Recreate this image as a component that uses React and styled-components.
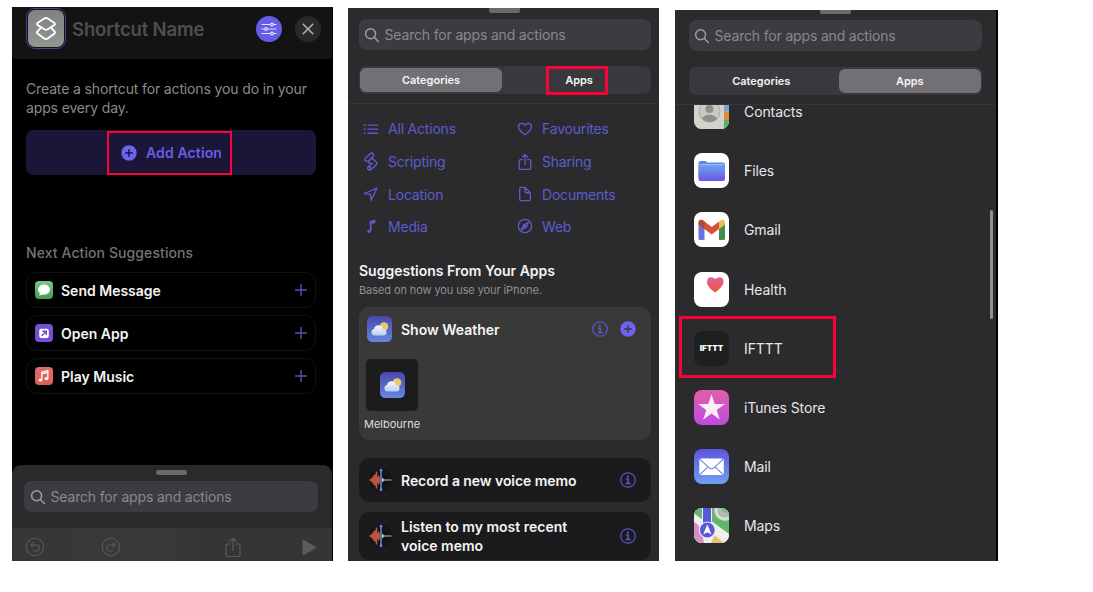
import React from 'react';
import styled, { createGlobalStyle } from 'styled-components';

const Global = createGlobalStyle`
  * { box-sizing: border-box; }
  body { margin: 0; background: #fff; font-family: Inter, "Liberation Sans", sans-serif; }
  svg { display: block; flex: none; }
`;

const Page = styled.main`
  width: 1093px;
  height: 592px;
  display: flex;
  align-items: flex-start;
  overflow: hidden;
`;

const Panel = styled.section`
  width: ${p => p.$w}px;
  height: ${p => 561 - p.$top}px;
  margin-top: ${p => p.$top}px;
  margin-left: ${p => p.$gap}px;
  flex: none;
  display: flex;
  flex-direction: column;
  overflow: hidden;
  position: relative;
  background: ${p => p.$bg || '#2b2b2d'};
  border-right: ${p => p.$edge || 0}px solid #000;
`;

const Label = styled.span`
  font-size: ${p => p.$size || 14}px;
  font-weight: ${p => p.$weight || 400};
  letter-spacing: ${p => p.$ls || 0}px;
  line-height: ${p => p.$lh || 19}px;
  color: ${p => p.$color || '#f4f4f4'};
  white-space: pre;
`;

const Highlight = styled.div`
  position: absolute;
  left: ${p => p.$x}px;
  top: ${p => p.$y}px;
  width: ${p => p.$w}px;
  height: ${p => p.$h}px;
  border: ${p => p.$t}px solid #fb0339;
`;

/* shortcut editor */
const Header = styled.header`
  height: 52px;
  padding: 1px 11px 0 14px;
  display: flex;
  align-items: flex-start;
  background: #131313;
`;
const IconRing = styled.div`
  width: 40px;
  height: 41px;
  border: 1.5px solid #42419a;
  border-radius: 9px;
  padding: 1px;
  margin-right: 6px;
`;
const ShortcutTile = styled.div`
  width: 100%;
  height: 100%;
  border-radius: 7px;
  background: linear-gradient(#7f827f, #929792);
  display: flex;
  align-items: center;
  justify-content: center;
`;
const Title = styled(Label)`
  flex: 1;
  margin-top: 9px;
`;
const RoundButton = styled.div`
  width: 26px;
  height: 26px;
  margin: 8px 0 0 ${p => p.$ml || 0}px;
  border-radius: 50%;
  background: ${p => p.$bg};
  display: flex;
  align-items: center;
  justify-content: center;
`;
const EditorBody = styled.div`
  flex: 1;
  padding: 20px 16px 0 14px;
  display: flex;
  flex-direction: column;
`;
const AddButton = styled.div`
  position: relative;
  height: 45px;
  margin-top: 13px;
  border-radius: 7px;
  background: #1b1638;
  display: flex;
  align-items: center;
  padding-left: 95px;
  gap: 9px;
`;
const SectionLabel = styled(Label)`
  margin-top: 68px;
`;
const SuggestionList = styled.div`
  margin-top: 10px;
  display: flex;
  flex-direction: column;
  gap: 7px;
`;
const SuggestionRow = styled.div`
  height: 36px;
  border: 1px solid #121212;
  border-radius: 11px;
  padding: 0 8px;
  display: flex;
  align-items: center;
  gap: 8px;
  & > span { flex: 1; }
`;
const BottomSheet = styled.div`
  height: 96px;
  border-radius: 9px 9px 0 0;
  background: #2a292b;
  display: flex;
  flex-direction: column;
  overflow: hidden;
`;
const Grabber = styled.div`
  width: 31px;
  height: ${p => p.$h || 5}px;
  margin: ${p => p.$m};
  flex: none;
  border-radius: ${p => (p.$cut ? '0 0 2px 2px' : '2.5px')};
  background: #6a6a6c;
`;
const Search = styled.div`
  height: 31px;
  margin: ${p => p.$m};
  flex: none;
  border-radius: 8px;
  background: #3d3b40;
  display: flex;
  align-items: center;
  padding-left: ${p => p.$pl}px;
  gap: 4.5px;
`;
const Toolbar = styled.div`
  height: 33px;
  margin-top: 16px;
  padding: 0 15px 0 13px;
  display: flex;
  align-items: center;
  background: linear-gradient(90deg, #363537 0, #3a383b 35%, #39373a 50%, #343435 62%, #353536 100%);
  & > svg { margin-top: 5px; }
`;
const ToolGap = styled.div`
  width: ${p => p.$w}px;
`;

/* action picker */
const Segments = styled.div`
  position: relative;
  height: 28px;
  margin: ${p => p.$m};
  flex: none;
  padding: 2px 1px;
  border-radius: 7px;
  background: #3a383c;
  display: flex;
  gap: 6px;
`;
const Segment = styled.div`
  flex: 1;
  border-radius: 6px;
  background: ${p => (p.$active ? '#727075' : 'transparent')};
  display: flex;
  align-items: center;
  justify-content: center;
`;
const Divider = styled.div`
  height: 1px;
  flex: none;
  margin-top: 9px;
  background: #363638;
`;
const CategoryGrid = styled.div`
  padding: 8px 0 0 15px;
  display: grid;
  grid-template-columns: 154px 1fr;
  grid-template-rows: 33px 33px 32px 32px;
`;
const Category = styled.div`
  display: flex;
  align-items: center;
  gap: 9px;
`;
const Headline = styled.div`
  margin: 19px 0 0 11px;
  display: flex;
  flex-direction: column;
  gap: 1px;
`;
const WeatherCard = styled.div`
  height: 133px;
  flex: none;
  margin: 7px 8px 0 11px;
  padding: 9px 15px 0 8px;
  border-radius: 11px;
  background: #393939;
`;
const CardHead = styled.div`
  height: 26px;
  display: flex;
  align-items: center;
`;
const CardTitle = styled(Label)`
  flex: 1;
  margin-left: 9px;
`;
const PlaceTile = styled.div`
  width: 52px;
  height: 52px;
  margin: 17px 0 0 -1px;
  border-radius: 5px;
  background: #1c1c1d;
  display: flex;
  align-items: center;
  justify-content: center;
`;
const PlaceName = styled(Label)`
  display: block;
  margin: 5px 0 0 -3px;
`;
const MemoCard = styled.div`
  height: ${p => p.$h}px;
  flex: none;
  margin: ${p => p.$mt}px 8px 0 11px;
  padding: 0 15px 0 9px;
  border-radius: 11px;
  background: #1b1b1d;
  display: flex;
  align-items: center;
  & > span { flex: 1; margin-left: 9px; }
`;

/* app list */
const AppList = styled.div`
  flex: 1;
  overflow: hidden;
  padding-left: 19px;
`;
const AppRow = styled.div`
  height: 59.2px;
  margin-top: ${p => (p.$first ? -23.1 : 0)}px;
  display: flex;
  align-items: center;
  gap: 15px;
`;
const AppIcon = styled.div`
  width: 35px;
  height: 35px;
  flex: none;
  border-radius: 8px;
  overflow: hidden;
  background: ${p => p.$bg};
  display: flex;
  align-items: center;
  justify-content: center;
`;
const ScrollThumb = styled.div`
  position: absolute;
  left: 315px;
  top: 200px;
  width: 3px;
  height: 109px;
  border-radius: 2px;
  background: #929293;
`;

const BLUE = '#5d5bd0';
const stroke = (color, width) => ({ fill: 'none', stroke: color, strokeWidth: width, strokeLinecap: 'round', strokeLinejoin: 'round' });

const Magnifier = () => (
  <svg width="16" height="16" viewBox="0 0 16 16" {...stroke('#a09fa3', 1.4)}>
    <circle cx="6.6" cy="6.8" r="5" /><path d="M10.4 10.6l4 4" />
  </svg>
);
const PlusDisc = ({ size = 16, cut = '#1b1638' }) => (
  <svg width={size} height={size} viewBox="0 0 16 16">
    <circle cx="8" cy="8" r="7.7" fill="#6c63f0" />
    <path d="M8 4.7v6.6M4.7 8h6.6" {...stroke(cut, 1.5)} />
  </svg>
);
const Info = () => (
  <svg width="16" height="16" viewBox="0 0 16 16">
    <circle cx="8" cy="8" r="7.2" {...stroke('#5755c4', 1.3)} />
    <circle cx="7.8" cy="4.5" r="1.1" fill="#5d5bd0" />
    <path d="M6.500 7h1.700v4.300M6.200 11.500h3.900" {...stroke('#5d5bd0', 1.5)} />
  </svg>
);
const Plus = () => (
  <svg width="12" height="12" viewBox="0 0 12 12"><path d="M6 .5v11M.5 6h11" {...stroke('#5452bd', 1.4)} /></svg>
);
const ShareGlyph = ({ w, h, color, sw = 1.2 }) => (
  <svg width={w} height={h} viewBox="0 0 16 20" {...stroke(color, sw)}>
    <path d="M5 6.500H2.500Q1 6.500 1 8v9.500Q1 19 2.500 19h11q1.500 0 1.500-1.500V8q0-1.500-1.500-1.500H11M8 13V1M4.800 4L8 .8 11.200 4" />
  </svg>
);
const Turn = ({ flip }) => (
  <svg width="20" height="20" viewBox="0 0 20 20" {...stroke('#545355', 1.3)}>
    <circle cx="10" cy="10" r="8.700" />
    <path transform={flip ? 'matrix(-1 0 0 1 20 0)' : undefined} d="M8.200 5.500L5.800 7.900l2.400 2.400M6 7.900h5.200a3 3 0 0 1 0 6H8.500" />
  </svg>
);

const categoryGlyphs = {
  list: <><path d="M5 4h10M5 8.200h10M5 12.400h10" /><path d="M1.200 4h.6M1.200 8.200h.6M1.200 12.400h.6" strokeWidth="1.600" /></>,
  heart: <path d="M8 14C5 11.800 1.300 9 1.300 5.700 1.300 3.600 2.700 2.200 4.500 2.200 6 2.200 7.300 3 8 4.400 8.700 3 10 2.200 11.500 2.200c1.800 0 3.200 1.400 3.200 3.500C14.700 9 11 11.800 8 14z" />,
  location: <path d="M14.200 1.800L1.200 7.700l6.300.8.600 6.200z" />,
  note: <path d="M7 3l5.300-1.500v3.200L8.300 5.900V12.500q0 2-2 2.400-2 .3-2.100-1.200 0-1.400 2.800-2.100z" fill={BLUE} strokeWidth=".5" />,
  doc: <path d="M2.500 2.500q0-1.300 1.300-1.300H8l5.500 5.500V13.500q0 1.300-1.300 1.300H3.800q-1.300 0-1.300-1.300zM8 1.200v4.300q0 1.200 1.200 1.200h4.300" />,
  compass: <><circle cx="8" cy="8" r="6.900" /><path d="M11.700 4.300L9.200 9.200 4.300 11.700 6.800 6.800z" /><circle cx="8" cy="8" r="1" fill={BLUE} /></>,
};
const CategoryIcon = ({ name }) => {
  if (name === 'share') {
    return <svg width="16" height="18" viewBox="-1 -1 18 22" {...stroke(BLUE, 1.6)}><path d="M5 7H2.500Q1 7 1 8.500v9Q1 19 2.500 19h11q1.500 0 1.500-1.500v-9Q15 7 13.500 7H11M8 13V1M4.800 4L8 .8 11.200 4" /></svg>;
  }
  if (name === 'script') {
    return (
      <svg width="16" height="19" viewBox="-1 -.5 16 19" {...stroke(BLUE, 1.4)}>
        <path d="M4.600 8.600L1.700 8.500Q.2 7.200 1.300 5.900L6.300 1.100Q8-.1 9.400 1.600 10.100 3 8.900 4.200L4.600 8.600Q3.900 9.900 5.300 10.500L8 11l-3.700 3.200Q3.200 15.300 4 16.700 5.300 18 7 16.900L12.500 11.900Q13.500 10.800 12.300 9.500L8.700 6.300 6.800 6.400M4.400 14.200q2.200-.3 2.700 2.500" />
      </svg>
    );
  }
  return <svg width="16" height="16" viewBox="0 -.3 16 16.600" {...stroke(BLUE, 1.35)}>{categoryGlyphs[name]}</svg>;
};

const Weather = ({ id }) => (
  <svg width="25" height="26" viewBox="0 0 25 26">
    <defs>
      <linearGradient id={`${id}s`} x2="0" y2="1"><stop stopColor="#4a46ae" /><stop offset="1" stopColor="#6687df" /></linearGradient>
      <linearGradient id={`${id}c`} x2="0" y2="1"><stop stopColor="#f6f9ff" /><stop offset="1" stopColor="#b9cff0" /></linearGradient>
    </defs>
    <rect width="25" height="26" rx="5.500" fill={`url(#${id}s)`} />
    <circle cx="17" cy="10.500" r="4.300" fill="#e6ca6b" />
    <path d="M7.500 19.500a3.300 3.300 0 0 1-.5-6.500 4.600 4.600 0 0 1 9 0 3.300 3.300 0 0 1 1 6.500z" fill={`url(#${id}c)`} />
  </svg>
);
const Wave = () => (
  <svg width="24" height="24" viewBox="0 0 24 24" strokeLinecap="round">
    <circle cx="12" cy="12" r="11.500" fill="#151516" />
    <path d="M.5 12L4 10.500 6 7.500 8 6l1.500 3.500h3v5H9.500L8 18l-2-1.500-2-3z" fill="#b04e3a" />
    <path d="M2.500 11.500v1M4.500 9.500v5M6.500 7v10M8.500 4v16M10.500 8v8" stroke="#bc5540" strokeWidth="1.500" />
    <path d="M14 9.500l2.500 2h7v1h-7L14 14.500z" fill="#b9b9ba" />
    <path d="M13 2.500v19" stroke="#5c8bd8" strokeWidth="1.500" />
    <circle cx="13" cy="2.200" r="1.400" fill="#5c8bd8" /><circle cx="13" cy="21.800" r="1.400" fill="#5c8bd8" />
  </svg>
);

const MessageIcon = () => (
  <svg width="18" height="18" viewBox="0 0 18 18">
    <defs><linearGradient id="msg" x2="0" y2="1"><stop stopColor="#7bc883" /><stop offset="1" stopColor="#429b50" /></linearGradient></defs>
    <rect width="18" height="18" rx="4" fill="url(#msg)" />
    <ellipse cx="9" cy="8.600" rx="6" ry="5.100" fill="#fff" /><path d="M5 11.500q.1 1.900-1.200 2.900 2.400.2 4-1.400z" fill="#fff" />
  </svg>
);
const OpenIcon = () => (
  <svg width="18" height="18" viewBox="0 0 18 18">
    <rect width="18" height="18" rx="4" fill="#7650d4" />
    <rect x="4.200" y="4.800" width="9.600" height="9.200" rx="2" fill="#fff" />
    <path d="M7 11.500l4-4M8 7.200h3.300v3.300" {...stroke('#6a45c8', 1.4)} />
  </svg>
);
const MusicIcon = () => (
  <svg width="18" height="18" viewBox="0 0 18 18">
    <defs><linearGradient id="mus" x2="0" y2="1"><stop stopColor="#df6c70" /><stop offset="1" stopColor="#e0604f" /></linearGradient></defs>
    <rect width="18" height="18" rx="4" fill="url(#mus)" />
    <path d="M6.800 12.800V5.200l6-1.500v7.600M6.800 6.800l6-1.500" fill="none" stroke="#fff" strokeWidth="1.300" />
    <ellipse cx="5.500" cy="13" rx="1.900" ry="1.600" fill="#fff" /><ellipse cx="11.500" cy="11.600" rx="1.900" ry="1.600" fill="#fff" />
  </svg>
);

const ContactsArt = () => (
  <svg width="35" height="35" viewBox="0 0 35 35">
    <rect width="35" height="35" fill="#d3d1cc" />
    <path d="M30 0h5v9h-5z" fill="#a0a0a0" /><path d="M30 9h5v8.500h-5z" fill="#6fa2e6" /><path d="M30 17.500h5v8.500h-5z" fill="#e38c35" /><path d="M30 26h5v9h-5z" fill="#4cb85e" />
    <circle cx="15.500" cy="17.500" r="10.500" fill="#cac8c3" stroke="#aaa8a4" strokeWidth="1" />
    <circle cx="15.500" cy="15" r="4" fill="#918f8c" />
    <path d="M8 24.800q2-4 7.500-4t7.500 4q-3 3.200-7.500 3.200T8 24.800z" fill="#918f8c" />
  </svg>
);
const FilesArt = () => (
  <svg width="35" height="35" viewBox="0 0 35 35">
    <defs><linearGradient id="fil" x2="0" y2="1"><stop stopColor="#6fa0f3" /><stop offset="1" stopColor="#6558df" /></linearGradient></defs>
    <path d="M4.500 10q0-2 2-2h5l2 1.600h15.500q2 0 2 2V25H4.500z" fill="#5c8be0" />
    <path d="M4.500 12h26.500v14q0 2-2 2H6.500q-2 0-2-2z" fill="url(#fil)" /><path d="M5.500 11.500h24.500" stroke="#a6ccfa" strokeWidth=".8" />
  </svg>
);
const GmailArt = () => (
  <svg width="35" height="35" viewBox="0 0 35 35">
    <path d="M4.500 12l6 4.500V28H6q-1.500 0-1.500-1.500z" fill="#6a70e2" />
    <path d="M25 16.500l6-4.500v14.500q0 1.500-1.500 1.500H25z" fill="#448d50" />
    <path d="M25 10l1.500-1.500Q29 6.700 30.600 9q.4.700.4 3.400l-6 4.500z" fill="#e8bd4e" />
    <path d="M4.500 12.400V11q0-2.600 2-3.200 1.500-.4 3 .9L17.700 15 25 9.500v7.400l-7.300 5.500-7.200-5.500z" fill="#d9503d" />
    <path d="M4.500 12.400V11q0-2.600 2-3.200 2-.3 4 1.700v7.400z" fill="#b6453c" />
  </svg>
);
const HealthArt = () => (
  <svg width="35" height="35" viewBox="0 0 35 35">
    <defs><linearGradient id="hea" x2="0" y2="1"><stop stopColor="#e45f9c" /><stop offset="1" stopColor="#e95a38" /></linearGradient></defs>
    <path d="M21.300 20.500C17 17.500 13 14 13 10q0-4.500 4-4.700 2.800 0 4.300 1.700 1.500-1.700 4.300-1.700 4 .2 4 4.700 0 4-8.300 10.500z" fill="url(#hea)" />
  </svg>
);
const StarArt = () => (
  <svg width="35" height="35" viewBox="0 0 35 35">
    <path d="M17.500 4.300l3.200 9.600h10.200l-8.200 6 3.100 9.700-8.300-6-8.300 6 3.100-9.700-8.200-6h10.200z" fill="#fbeefb" />
  </svg>
);
const MailArt = () => (
  <svg width="35" height="35" viewBox="0 0 35 35">
    <rect x="5.300" y="9.500" width="24.500" height="16.500" rx="2" fill="#fff" />
    <path d="M6 10.300l9.300 8.600q2.200 1.800 4.400 0L29 10.300M6 25.300l8-7.400M29 25.300l-8-7.400" fill="none" stroke="#6586d8" strokeWidth="1.100" />
  </svg>
);
const MapsArt = () => (
  <svg width="35" height="35" viewBox="0 0 35 35">
    <rect width="35" height="35" fill="#f0efec" />
    <path d="M0 0h9v12L0 5.500zM18 0h17v26L18 13.500z" fill="#5fb968" />
    <path d="M0 14q6 3 8 10l2 11H0z" fill="#d68cc4" />
    <path d="M17 35l3.500-8 9.500 8z" fill="#e6c46c" />
    <circle cx="31" cy="2" r="9" fill="none" stroke="#dad9d6" strokeWidth="3.500" /><circle cx="31" cy="2" r="7" fill="#b4b9b2" /><path d="M27 0h8v5q-6 1-8-5z" fill="#7fbb83" />
    <path d="M8.500-1h9v17h-9z" fill="#5b57dd" stroke="#f1f1f4" strokeWidth="1" />
    <circle cx="13.300" cy="22" r="8" fill="#5b57dd" stroke="#eeeefa" strokeWidth="1.200" />
    <path d="M13.300 16.500l4.200 10-4.200-2.200-4.200 2.200z" fill="#fff" />
  </svg>
);

const Wordmark = styled.span`
  font-size: 8px;
  font-weight: 900;
  color: #fff;
`;

const apps = [
  ['Contacts', '#d3d1cc', <ContactsArt />],
  ['Files', '#fff', <FilesArt />],
  ['Gmail', '#fff', <GmailArt />],
  ['Health', '#fff', <HealthArt />],
  ['IFTTT', '#1e1f20', <Wordmark>IFTTT</Wordmark>],
  ['iTunes Store', 'linear-gradient(#e05fa9, #bf4be0)', <StarArt />],
  ['Mail', 'linear-gradient(#5e55dd, #6f9ff4)', <MailArt />],
  ['Maps', '#ecebe8', <MapsArt />],
];

const categories = [
  ['list', 'All Actions'], ['heart', 'Favourites'],
  ['script', 'Scripting'], ['share', 'Sharing'],
  ['location', 'Location'], ['doc', 'Documents'],
  ['note', 'Media'], ['compass', 'Web'],
];

const suggestions = [
  [<MessageIcon />, 'Send Message'],
  [<OpenIcon />, 'Open App'],
  [<MusicIcon />, 'Play Music'],
];

const SearchField = ({ m, pl = 5 }) => (
  <Search $m={m} $pl={pl}><Magnifier /><Label $ls={-0.17} $color="#89888d">Search for apps and actions</Label></Search>
);

function Editor() {
  return (
    <Panel $w={321} $top={7} $gap={12} $bg="#000" $edge={1}>
      <Header>
        <IconRing>
          <ShortcutTile>
            <svg width="24" height="26" viewBox="0 0 24 26" {...stroke('#fff', 1.9)}>
              <path d="M10.300 2.500L3.800 6.700q-1.600 1.200 0 2.400L10.300 13.300q1.700 1 3.400 0L20.200 9.100q1.600-1.200 0-2.400L13.700 2.500q-1.700-1-3.400 0z" />
              <path d="M6.200 12.500L3.600 15.300q-1.400 1.300.2 2.500l6.500 4.700q1.700 1 3.400 0l6.500-4.700q1.600-1.200.2-2.500l-2.600-2.800" />
            </svg>
          </ShortcutTile>
        </IconRing>
        <Title $size={18.5} $weight={600} $lh={24} $ls={-0.15} $color="#4f4f50">Shortcut Name</Title>
        <RoundButton $bg="#655de8">
          <svg width="16" height="14" viewBox="0 0 16 14" stroke="#d9e4ff" strokeWidth="1.200" fill="#655de8">
            <path d="M.5 2.500h15M.5 7h15M.5 11.500h15" /><circle cx="11" cy="2.500" r="1.400" /><circle cx="5" cy="7" r="1.400" /><circle cx="11" cy="11.500" r="1.400" />
          </svg>
        </RoundButton>
        <RoundButton $bg="#29292a" $ml={13}>
          <svg width="12" height="12" viewBox="0 0 12 12"><path d="M1.200 1.200l9.600 9.600M10.800 1.200l-9.600 9.600" {...stroke('#b0b0b0', 1.6)} /></svg>
        </RoundButton>
      </Header>
      <EditorBody>
        <Label $ls={-0.14} $color="#8a8a8c">{'Create a shortcut for actions you do in your\napps every day.'}</Label>
        <AddButton>
          <PlusDisc />
          <Label $weight={600} $ls={0.12} $color="#665eea">Add Action</Label>
          <Highlight $x={81} $y={1} $w={125} $h={44} $t={2} />
        </AddButton>
        <SectionLabel $weight={500} $ls={0.09} $color="#747477">Next Action Suggestions</SectionLabel>
        <SuggestionList>
          {suggestions.map(([icon, name]) => (
            <SuggestionRow key={name}>{icon}<Label $weight={600}>{name}</Label><Plus /></SuggestionRow>
          ))}
        </SuggestionList>
      </EditorBody>
      <BottomSheet>
        <Grabber $m="5px 0 0 144px" />
        <SearchField m="6px 14px 0 12px" pl={6} />
        <Toolbar>
          <Turn /><ToolGap $w={56} /><Turn flip /><ToolGap $w={104} />
          <ShareGlyph w={16} h={21} color="#5a595b" /><ToolGap $w={61} />
          <svg width="15" height="17" viewBox="0 0 15 17"><path d="M1 1l13 7.500L1 16z" fill="#5c5b5d" stroke="#5c5b5d" strokeLinejoin="round" /></svg>
        </Toolbar>
      </BottomSheet>
    </Panel>
  );
}

function Categories() {
  return (
    <Panel $w={311} $top={8} $gap={15}>
      <Grabber $cut $m="0 0 0 141px" />
      <SearchField m="6px 8px 0 11px" />
      <Segments $m="16px 8px 0 11px">
        <Segment $active><Label $size={11} $weight={600}>Categories</Label></Segment>
        <Segment><Label $size={11} $weight={600} $ls={-0.1}>Apps</Label></Segment>
        <Highlight $x={187} $y={0} $w={62} $h={29} $t={3} />
      </Segments>
      <Divider />
      <CategoryGrid>
        {categories.map(([icon, name]) => (
          <Category key={name}><CategoryIcon name={icon} /><Label $ls={-0.2} $color={BLUE}>{name}</Label></Category>
        ))}
      </CategoryGrid>
      <Headline>
        <Label $weight={600}>Suggestions From Your Apps</Label>
        <Label $size={11} $ls={-0.09} $color="#8f8f91">Based on how you use your iPhone.</Label>
      </Headline>
      <WeatherCard>
        <CardHead>
          <Weather id="a" />
          <CardTitle $weight={600}>Show Weather</CardTitle>
          <Info /><ToolGap $w={12} /><PlusDisc cut="#393939" />
        </CardHead>
        <PlaceTile><Weather id="b" /></PlaceTile>
        <PlaceName $size={11} $lh={16} $color="#dedede">Melbourne</PlaceName>
      </WeatherCard>
      <MemoCard $h={44} $mt={18}><Wave /><Label $weight={600} $ls={-0.07}>Record a new voice memo</Label><Info /></MemoCard>
      <MemoCard $h={48} $mt={10}><Wave /><Label $weight={600}>{'Listen to my most recent\nvoice memo'}</Label><Info /></MemoCard>
    </Panel>
  );
}

function Apps() {
  return (
    <Panel $w={323} $top={10} $gap={16} $edge={2}>
      <Grabber $cut $h={4} $m="0 0 0 145px" />
      <SearchField m="6px 14px 0 14px" />
      <Segments $m="16px 14px 0 14px">
        <Segment><Label $size={11} $weight={600}>Categories</Label></Segment>
        <Segment $active><Label $size={11} $weight={600} $ls={-0.1}>Apps</Label></Segment>
      </Segments>
      <Divider />
      <AppList>
        {apps.map(([name, bg, art], i) => (
          <AppRow key={name} $first={i === 0}>
            <AppIcon $bg={bg}>{art}</AppIcon>
            <Label $ls={-0.1} $lh={13} $color="#e6e6e7">{name}</Label>
          </AppRow>
        ))}
      </AppList>
      <ScrollThumb />
      <Highlight $x={4} $y={306} $w={157} $h={62} $t={3} />
    </Panel>
  );
}

export default function App() {
  return (
    <>
      <Global />
      <Page>
        <Editor />
        <Categories />
        <Apps />
      </Page>
    </>
  );
}
